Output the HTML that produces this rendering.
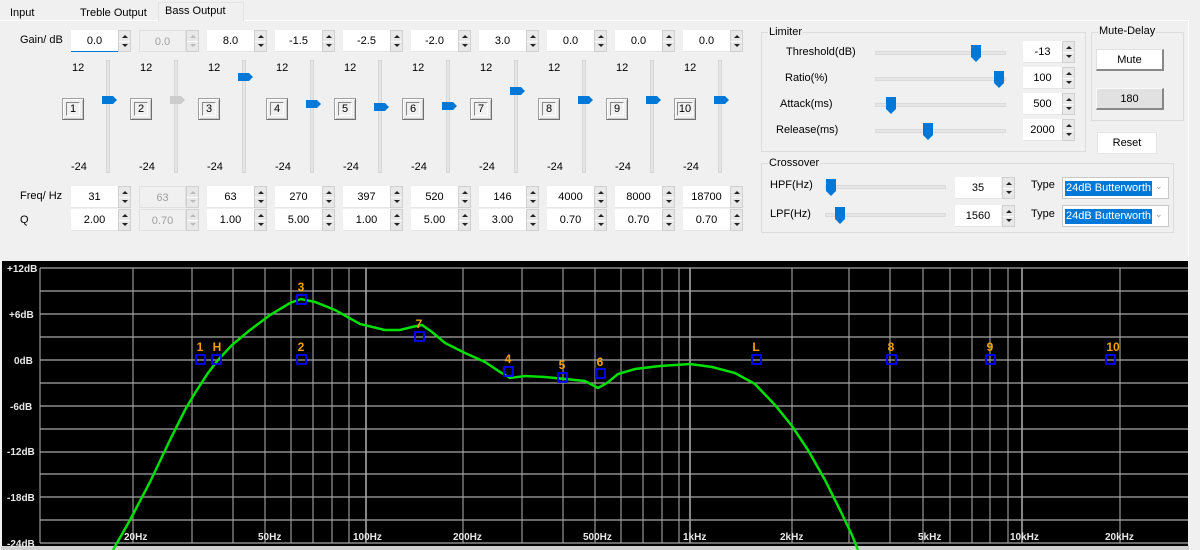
<!DOCTYPE html>
<html><head><meta charset="utf-8">
<style>
*{box-sizing:border-box;margin:0;padding:0}
body{width:1200px;height:550px;background:#f0f0f0;font-family:"Liberation Sans",sans-serif;font-size:11px;color:#000;position:relative;overflow:hidden}
div,span{position:absolute}
.t{white-space:nowrap}
.in{width:47px;height:22px;background:#fff;border-bottom:1px solid #e6e6e6;text-align:center;line-height:22px;font-size:11px}
.dis{background:#f0f0f0;border:1px solid #e0e0e0;color:#a0a0a0}
.sp{width:13px;height:22px;background:#e8e8e8;border:1px solid #d0d0d0}
.sp::before{content:"";position:absolute;left:3px;top:4px;border-left:3px solid transparent;border-right:3px solid transparent;border-bottom:3px solid #222}
.sp::after{content:"";position:absolute;left:3px;top:13px;border-left:3px solid transparent;border-right:3px solid transparent;border-top:3px solid #222}
.sp i{position:absolute;left:0;right:0;top:10px;height:1px;background:#fff}
.sp.d::before{border-bottom-color:#bbb}.sp.d::after{border-top-color:#bbb}
.nb{width:22px;height:22px;border:1px solid #a0a0a0;border-right-color:#707070;border-bottom-color:#707070;background:#f0f0f0;box-shadow:inset 1px 1px 0 #fff,inset -1px -1px 0 #c8c8c8;text-align:center;line-height:20px;font-size:11px}
.nb b{position:absolute;left:3px;top:3px;width:14px;height:14px;border:1px solid #888;border-right-color:#fff;border-bottom-color:#fff;font-weight:normal;line-height:12px}
.tr{width:4px;height:113px;background:#e6e6e6;border:1px solid #d6d6d6}
.th{width:11px;height:8px;background:#0078d7}
.th::after{content:"";position:absolute;left:11px;top:0;border-top:4px solid transparent;border-bottom:4px solid transparent;border-left:4px solid #0078d7}
.th.g{background:#cccccc}.th.g::after{border-left-color:#cccccc}
.ht{height:4px;background:#e6e6e6;border:1px solid #dadada}
.vt{width:10px;height:12px;background:#0078d7}
.vt::after{content:"";position:absolute;left:0;top:12px;border-left:5px solid transparent;border-right:5px solid transparent;border-top:5px solid #0078d7}
.grp{border:1px solid #dcdcdc}
.btn{height:22px;text-align:center;line-height:21px;font-size:11px}
</style></head><body>
<!-- tabs -->
<div style="left:0;top:20px;width:1189px;height:240px;border-top:1px solid #fff;border-right:1px solid #fff"></div>
<span class="t" style="left:10px;top:7px">Input</span>
<span class="t" style="left:80px;top:7px">Treble Output</span>
<div style="left:158px;top:2px;width:86px;height:19px;background:#f0f0f0;border:1px solid #e4e4e4;border-bottom:none"></div>
<span class="t" style="left:165px;top:5px">Bass Output</span>

<span class="t" style="left:20px;top:34px">Gain/ dB</span>
<span class="t" style="left:20px;top:190px">Freq/ Hz</span>
<span class="t" style="left:20px;top:214px">Q</span>

<!-- col 1 -->
<div class="in" style="left:71px;top:30px;border-bottom:1px solid #0078d7">0.0</div><div class="sp" style="left:118px;top:30px"><i></i></div>
<span class="t" style="left:72px;top:62px">12</span><span class="t" style="left:71px;top:161px">-24</span>
<div class="nb" style="left:62px;top:98px"><b>1</b></div>
<div class="tr" style="left:106px;top:60px"></div><div class="th" style="left:102px;top:96px"></div>
<div class="in" style="left:71px;top:186px">31</div><div class="sp" style="left:118px;top:186px"><i></i></div>
<div class="in" style="left:71px;top:209px">2.00</div><div class="sp" style="left:118px;top:209px"><i></i></div>
<!-- col 2 -->
<div class="in dis" style="left:139px;top:30px">0.0</div><div class="sp d" style="left:186px;top:30px"><i></i></div>
<span class="t" style="left:140px;top:62px">12</span><span class="t" style="left:139px;top:161px">-24</span>
<div class="nb" style="left:130px;top:98px"><b>2</b></div>
<div class="tr" style="left:174px;top:60px"></div><div class="th g" style="left:170px;top:96px"></div>
<div class="in dis" style="left:139px;top:186px">63</div><div class="sp d" style="left:186px;top:186px"><i></i></div>
<div class="in dis" style="left:139px;top:209px">0.70</div><div class="sp d" style="left:186px;top:209px"><i></i></div>
<!-- col 3 -->
<div class="in" style="left:207px;top:30px">8.0</div><div class="sp" style="left:254px;top:30px"><i></i></div>
<span class="t" style="left:208px;top:62px">12</span><span class="t" style="left:207px;top:161px">-24</span>
<div class="nb" style="left:198px;top:98px"><b>3</b></div>
<div class="tr" style="left:242px;top:60px"></div><div class="th" style="left:238px;top:73px"></div>
<div class="in" style="left:207px;top:186px">63</div><div class="sp" style="left:254px;top:186px"><i></i></div>
<div class="in" style="left:207px;top:209px">1.00</div><div class="sp" style="left:254px;top:209px"><i></i></div>
<!-- col 4 -->
<div class="in" style="left:275px;top:30px">-1.5</div><div class="sp" style="left:322px;top:30px"><i></i></div>
<span class="t" style="left:276px;top:62px">12</span><span class="t" style="left:275px;top:161px">-24</span>
<div class="nb" style="left:266px;top:98px"><b>4</b></div>
<div class="tr" style="left:310px;top:60px"></div><div class="th" style="left:306px;top:100px"></div>
<div class="in" style="left:275px;top:186px">270</div><div class="sp" style="left:322px;top:186px"><i></i></div>
<div class="in" style="left:275px;top:209px">5.00</div><div class="sp" style="left:322px;top:209px"><i></i></div>
<!-- col 5 -->
<div class="in" style="left:343px;top:30px">-2.5</div><div class="sp" style="left:390px;top:30px"><i></i></div>
<span class="t" style="left:344px;top:62px">12</span><span class="t" style="left:343px;top:161px">-24</span>
<div class="nb" style="left:334px;top:98px"><b>5</b></div>
<div class="tr" style="left:378px;top:60px"></div><div class="th" style="left:374px;top:103px"></div>
<div class="in" style="left:343px;top:186px">397</div><div class="sp" style="left:390px;top:186px"><i></i></div>
<div class="in" style="left:343px;top:209px">1.00</div><div class="sp" style="left:390px;top:209px"><i></i></div>
<!-- col 6 -->
<div class="in" style="left:411px;top:30px">-2.0</div><div class="sp" style="left:458px;top:30px"><i></i></div>
<span class="t" style="left:412px;top:62px">12</span><span class="t" style="left:411px;top:161px">-24</span>
<div class="nb" style="left:402px;top:98px"><b>6</b></div>
<div class="tr" style="left:446px;top:60px"></div><div class="th" style="left:442px;top:102px"></div>
<div class="in" style="left:411px;top:186px">520</div><div class="sp" style="left:458px;top:186px"><i></i></div>
<div class="in" style="left:411px;top:209px">5.00</div><div class="sp" style="left:458px;top:209px"><i></i></div>
<!-- col 7 -->
<div class="in" style="left:479px;top:30px">3.0</div><div class="sp" style="left:526px;top:30px"><i></i></div>
<span class="t" style="left:480px;top:62px">12</span><span class="t" style="left:479px;top:161px">-24</span>
<div class="nb" style="left:470px;top:98px"><b>7</b></div>
<div class="tr" style="left:514px;top:60px"></div><div class="th" style="left:510px;top:87px"></div>
<div class="in" style="left:479px;top:186px">146</div><div class="sp" style="left:526px;top:186px"><i></i></div>
<div class="in" style="left:479px;top:209px">3.00</div><div class="sp" style="left:526px;top:209px"><i></i></div>
<!-- col 8 -->
<div class="in" style="left:547px;top:30px">0.0</div><div class="sp" style="left:594px;top:30px"><i></i></div>
<span class="t" style="left:548px;top:62px">12</span><span class="t" style="left:547px;top:161px">-24</span>
<div class="nb" style="left:538px;top:98px"><b>8</b></div>
<div class="tr" style="left:582px;top:60px"></div><div class="th" style="left:578px;top:96px"></div>
<div class="in" style="left:547px;top:186px">4000</div><div class="sp" style="left:594px;top:186px"><i></i></div>
<div class="in" style="left:547px;top:209px">0.70</div><div class="sp" style="left:594px;top:209px"><i></i></div>
<!-- col 9 -->
<div class="in" style="left:615px;top:30px">0.0</div><div class="sp" style="left:662px;top:30px"><i></i></div>
<span class="t" style="left:616px;top:62px">12</span><span class="t" style="left:615px;top:161px">-24</span>
<div class="nb" style="left:606px;top:98px"><b>9</b></div>
<div class="tr" style="left:650px;top:60px"></div><div class="th" style="left:646px;top:96px"></div>
<div class="in" style="left:615px;top:186px">8000</div><div class="sp" style="left:662px;top:186px"><i></i></div>
<div class="in" style="left:615px;top:209px">0.70</div><div class="sp" style="left:662px;top:209px"><i></i></div>
<!-- col 10 -->
<div class="in" style="left:683px;top:30px">0.0</div><div class="sp" style="left:730px;top:30px"><i></i></div>
<span class="t" style="left:684px;top:62px">12</span><span class="t" style="left:683px;top:161px">-24</span>
<div class="nb" style="left:674px;top:98px"><b style="left:2px;width:16px">10</b></div>
<div class="tr" style="left:718px;top:60px"></div><div class="th" style="left:714px;top:96px"></div>
<div class="in" style="left:683px;top:186px">18700</div><div class="sp" style="left:730px;top:186px"><i></i></div>
<div class="in" style="left:683px;top:209px">0.70</div><div class="sp" style="left:730px;top:209px"><i></i></div>

<!-- Limiter -->
<div class="grp" style="left:761px;top:32px;width:325px;height:120px"></div>
<span class="t" style="left:768px;top:26px;background:#f0f0f0;padding:0 1px">Limiter</span>
<span class="t" style="left:786px;top:46px">Threshold(dB)</span>
<span class="t" style="left:785px;top:72px">Ratio(%)</span>
<span class="t" style="left:780px;top:98px">Attack(ms)</span>
<span class="t" style="left:776px;top:124px">Release(ms)</span>
<div class="ht" style="left:875px;top:51px;width:131px"></div><div class="vt" style="left:971px;top:45px"></div>
<div class="ht" style="left:875px;top:77px;width:131px"></div><div class="vt" style="left:994px;top:71px"></div>
<div class="ht" style="left:875px;top:103px;width:131px"></div><div class="vt" style="left:886px;top:97px"></div>
<div class="ht" style="left:875px;top:129px;width:131px"></div><div class="vt" style="left:923px;top:123px"></div>
<div class="in" style="left:1023px;top:41px;width:39px">-13</div><div class="sp" style="left:1062px;top:41px"><i></i></div>
<div class="in" style="left:1023px;top:67px;width:39px">100</div><div class="sp" style="left:1062px;top:67px"><i></i></div>
<div class="in" style="left:1023px;top:93px;width:39px">500</div><div class="sp" style="left:1062px;top:93px"><i></i></div>
<div class="in" style="left:1023px;top:119px;width:39px">2000</div><div class="sp" style="left:1062px;top:119px"><i></i></div>

<!-- Mute-Delay -->
<div class="grp" style="left:1091px;top:32px;width:93px;height:89px"></div>
<span class="t" style="left:1098px;top:25px;background:#f0f0f0;padding:0 1px">Mute-Delay</span>
<div class="btn" style="left:1096px;top:49px;width:68px;background:#fff;border:1px solid #e0e0e0;border-right:2px solid #888;border-bottom:2px solid #888">Mute</div>
<div class="btn" style="left:1096px;top:88px;width:68px;background:#e1e1e1;border:1px solid #f8f8f8;border-right:2px solid #888;border-bottom:2px solid #888">180</div>
<div class="btn" style="left:1097px;top:132px;width:60px;background:#fff;border:1px solid #e6e6e6">Reset</div>

<!-- Crossover -->
<div class="grp" style="left:761px;top:163px;width:413px;height:70px"></div>
<span class="t" style="left:768px;top:157px;background:#f0f0f0;padding:0 1px">Crossover</span>
<span class="t" style="left:770px;top:179px">HPF(Hz)</span>
<span class="t" style="left:770px;top:208px">LPF(Hz)</span>
<div class="ht" style="left:825px;top:185px;width:121px"></div><div class="vt" style="left:826px;top:179px"></div>
<div class="ht" style="left:825px;top:213px;width:121px"></div><div class="vt" style="left:835px;top:207px"></div>
<div class="in" style="left:955px;top:177px;width:46px">35</div><div class="sp" style="left:1002px;top:177px"><i></i></div>
<div class="in" style="left:955px;top:205px;width:46px">1560</div><div class="sp" style="left:1002px;top:205px"><i></i></div>
<span class="t" style="left:1031px;top:179px">Type</span>
<span class="t" style="left:1031px;top:208px">Type</span>
<div style="left:1062px;top:177px;width:107px;height:22px;background:#fff;border:1px solid #c8c8c8"><span class="t" style="left:2px;top:3px;background:#0078d7;color:#fff;padding:1px 1px;line-height:13px">24dB Butterworth</span><span style="left:92px;top:3px;color:#999;font-size:9px">&#8964;</span></div>
<div style="left:1062px;top:205px;width:107px;height:22px;background:#fff;border:1px solid #c8c8c8"><span class="t" style="left:2px;top:3px;background:#0078d7;color:#fff;padding:1px 1px;line-height:13px">24dB Butterworth</span><span style="left:92px;top:3px;color:#999;font-size:9px">&#8964;</span></div>

<!-- Graph -->
<svg style="position:absolute;left:0;top:260px" width="1200" height="290" viewBox="0 260 1200 290" font-family="Liberation Sans, sans-serif">
<rect x="2" y="261" width="1186" height="287" fill="#000"/>
<rect x="1" y="546" width="1188" height="4" fill="#d0d0d0"/>
<g stroke="#8a8a8a" stroke-width="1.3">
<line x1="40" y1="268" x2="40" y2="543"/>
<line x1="133" y1="268" x2="133" y2="543"/><line x1="192" y1="268" x2="192" y2="543"/><line x1="233" y1="268" x2="233" y2="543"/><line x1="265" y1="268" x2="265" y2="543"/><line x1="291" y1="268" x2="291" y2="543"/><line x1="313" y1="268" x2="313" y2="543"/><line x1="332" y1="268" x2="332" y2="543"/><line x1="349" y1="268" x2="349" y2="543"/>
<line x1="463" y1="268" x2="463" y2="543"/><line x1="522" y1="268" x2="522" y2="543"/><line x1="563" y1="268" x2="563" y2="543"/><line x1="595" y1="268" x2="595" y2="543"/><line x1="621" y1="268" x2="621" y2="543"/><line x1="643" y1="268" x2="643" y2="543"/><line x1="662" y1="268" x2="662" y2="543"/><line x1="679" y1="268" x2="679" y2="543"/>
<line x1="792" y1="268" x2="792" y2="543"/><line x1="849" y1="268" x2="849" y2="543"/><line x1="890" y1="268" x2="890" y2="543"/><line x1="923" y1="268" x2="923" y2="543"/><line x1="950" y1="268" x2="950" y2="543"/><line x1="972" y1="268" x2="972" y2="543"/><line x1="990" y1="268" x2="990" y2="543"/><line x1="1008" y1="268" x2="1008" y2="543"/>
<line x1="1120" y1="268" x2="1120" y2="543"/>
</g>
<g stroke="#b0b0b0" stroke-width="1.5"><line x1="366" y1="268" x2="366" y2="543"/><line x1="690" y1="268" x2="690" y2="543"/><line x1="1022" y1="268" x2="1022" y2="543"/></g>
<g stroke="#a8a8a8" stroke-width="1.3">
<line x1="40" y1="268" x2="1188" y2="268"/><line x1="40" y1="291" x2="1188" y2="291"/><line x1="40" y1="314" x2="1188" y2="314"/><line x1="40" y1="337" x2="1188" y2="337"/><line x1="40" y1="360" x2="1188" y2="360"/><line x1="40" y1="383" x2="1188" y2="383"/><line x1="40" y1="406" x2="1188" y2="406"/><line x1="40" y1="429" x2="1188" y2="429"/><line x1="40" y1="452" x2="1188" y2="452"/><line x1="40" y1="474" x2="1188" y2="474"/><line x1="40" y1="497" x2="1188" y2="497"/><line x1="40" y1="520" x2="1188" y2="520"/><line x1="40" y1="543" x2="1188" y2="543"/>
</g>
<g fill="#e8e8e8" font-size="10" font-weight="bold">
<text x="7" y="272">+12dB</text><text x="9" y="318">+6dB</text><text x="14" y="364">0dB</text><text x="10" y="410">-6dB</text><text x="7" y="455">-12dB</text><text x="7" y="501">-18dB</text><text x="7" y="547">-24dB</text>
<text x="124" y="540">20Hz</text><text x="258" y="540">50Hz</text><text x="353" y="540">100Hz</text><text x="453" y="540">200Hz</text><text x="583" y="540">500Hz</text><text x="683" y="540">1kHz</text><text x="780" y="540">2kHz</text><text x="918" y="540">5kHz</text><text x="1010" y="540">10kHz</text><text x="1105" y="540">20kHz</text>
</g>
<polyline fill="none" stroke="#00e000" stroke-width="2.5" points="113,550 130,520 150,482 170,440 185,410 195,393 208,373 218,360 232,345 250,330 270,315 290,303 301,299 315,302 335,310 360,324 385,330 400,330 412,327 422,325 432,332 445,343 465,353 485,362 500,372 510,378 525,376 545,377 565,379 585,381 598,388 607,383 618,374 635,369 660,366 690,364 712,367 735,373 755,384 775,405 792,426 808,450 825,480 840,510 852,535 858,550"/>
<g fill="none" stroke="#0000ff" stroke-width="1.8">
<rect x="196" y="355" width="9" height="9"/><rect x="212" y="355" width="9" height="9"/><rect x="297" y="295" width="9" height="9"/><rect x="297" y="355" width="9" height="9"/><rect x="415" y="332" width="9" height="9"/><rect x="504" y="367" width="9" height="9"/><rect x="558" y="373" width="9" height="9"/><rect x="596" y="369" width="9" height="9"/><rect x="752" y="355" width="9" height="9"/><rect x="887" y="355" width="9" height="9"/><rect x="986" y="355" width="9" height="9"/><rect x="1106" y="355" width="9" height="9"/>
</g>
<g fill="#f0a000" font-size="12" font-weight="bold" text-anchor="middle">
<text x="200" y="351">1</text><text x="217" y="351">H</text><text x="301" y="291">3</text><text x="301" y="351">2</text><text x="419" y="328">7</text><text x="508" y="363">4</text><text x="562" y="369">5</text><text x="600" y="366">6</text><text x="756" y="351">L</text><text x="891" y="351">8</text><text x="990" y="351">9</text><text x="1113" y="351">10</text>
</g>
</svg>
</body></html>
